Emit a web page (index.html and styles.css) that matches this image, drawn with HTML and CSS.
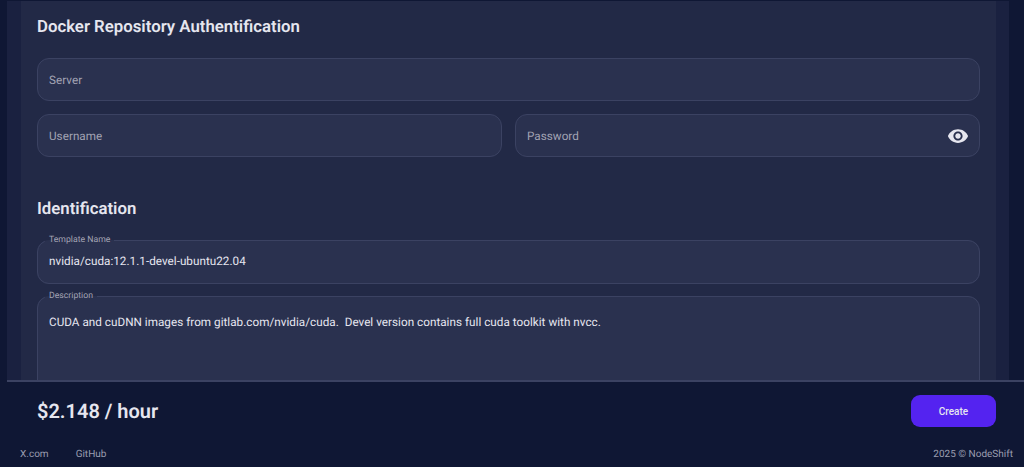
FILE: index.html
```html
<!DOCTYPE html>
<html lang="en">
<head>
  <meta charset="UTF-8">
  <title>Create Template</title>
  <link rel="stylesheet" href="styles.css">
</head>
<body>

  <div class="page">
    <main class="scroll">
      <div class="outer">
        <div class="panel">

          <h2 class="first">Docker Repository Authentification</h2>

          <div class="field">
            <input type="text" placeholder="Server">
          </div>

          <div class="row">
            <div class="field">
              <input type="text" placeholder="Username">
            </div>
            <div class="field">
              <input type="password" placeholder="Password">
              <svg class="eye" viewBox="0 0 24 24" width="24" height="24">
                <path fill="#e6e6ef" d="M12 4.5C7 4.5 2.73 7.61 1 12c1.73 4.39 6 7.5 11 7.5s9.27-3.11 11-7.5c-1.73-4.39-6-7.5-11-7.5zM12 17c-2.76 0-5-2.24-5-5s2.24-5 5-5 5 2.24 5 5-2.24 5-5 5zm0-8c-1.66 0-3 1.34-3 3s1.34 3 3 3 3-1.34 3-3-1.34-3-3-3z"/>
              </svg>
            </div>
          </div>

          <h2 class="second">Identification</h2>

          <fieldset class="outlined">
            <legend>Template Name</legend>
            <input type="text" value="nvidia/cuda:12.1.1-devel-ubuntu22.04">
          </fieldset>

          <fieldset class="outlined">
            <legend>Description</legend>
            <textarea rows="8">CUDA and cuDNN images from gitlab.com/nvidia/cuda.  Devel version contains full cuda toolkit with nvcc.</textarea>
          </fieldset>

        </div>
      </div>
    </main>

    <div class="price-bar">
      <div class="price">$2.148 / hour</div>
      <button>Create</button>
    </div>

    <footer>
      <div class="links">
        <a href="#">X.com</a>
        <a href="#">GitHub</a>
      </div>
      <div>2025 © NodeShift</div>
    </footer>
  </div>

</body>
</html>
```

FILE: styles.css
```css
* {
  box-sizing: border-box;
}
html, body {
  height: 100%;
}
body {
  margin: 0;
  font-family: Roboto, Arial, sans-serif;
  background-color: #0f1734;
  color: #e6e6ef;
  overflow: hidden;
  text-rendering: geometricPrecision;
}
.page {
  display: flex;
  flex-direction: column;
  height: 100vh;
  padding-left: 7px;
}
.scroll {
  flex: 1;
  min-height: 0;
  overflow: hidden;
  padding-top: 1px;
}
.outer {
  margin-right: 15px;
  padding: 0 13px 0 14px;
  background-color: #1a2140;
}
.panel {
  padding: 0 16px;
  background-color: #222946;
  height: 600px;
}
h2 {
  margin: 0;
  font-size: 16.8px;
  font-weight: 600;
  line-height: 20px;
  color: #e6e6ef;
}
h2.first {
  padding-top: 16px;
  margin-bottom: 21px;
}
h2.second {
  margin-top: 42px;
  margin-bottom: 16px;
}
.field {
  display: flex;
  align-items: center;
  flex: 1;
  height: 43px;
  padding: 0 11px;
  background-color: #2a314f;
  border: 1px solid #3b4262;
  border-radius: 12px;
}
.row {
  display: flex;
  gap: 13px;
  margin-top: 13px;
}
input, textarea {
  flex: 1;
  width: 100%;
  padding: 0;
  border: none;
  outline: none;
  background: transparent;
  font-family: inherit;
  font-size: 11.7px;
  letter-spacing: 0.03px;
  color: #e6e6ef;
  resize: none;
  text-rendering: geometricPrecision;
}
input::placeholder {
  color: #a2a3b3;
  opacity: 1;
}
.eye {
  flex: none;
  width: 22px;
  height: 22px;
  margin-right: -1px;
}
.outlined {
  display: flex;
  height: 49px;
  margin: 0 0 7px;
  padding: 0 11px 7px;
  background-color: #2a314f;
  border: 1px solid #3b4262;
  border-radius: 12px;
}
.outlined legend {
  margin-left: -4px;
  padding: 0 4px;
  font-size: 8.7px;
  line-height: 11px;
  color: #a2a3b3;
}
.outlined textarea {
  display: block;
  height: 200px;
  padding-top: 13px;
}
.outlined:last-child {
  height: 200px;
}
.price-bar {
  display: flex;
  flex: none;
  align-items: center;
  justify-content: space-between;
  height: 60px;
  padding: 0 28px 0 30px;
  background-color: #0f1734;
  border-top: 2px solid #3b4262;
}
.price {
  font-size: 20px;
  font-weight: 600;
}
button {
  width: 85px;
  height: 32px;
  background-color: #5423f0;
  color: #e6e6ef;
  border: none;
  border-radius: 9px;
  font-family: inherit;
  font-size: 10px;
  font-weight: 500;
  cursor: pointer;
}
footer {
  display: flex;
  flex: none;
  align-items: center;
  justify-content: space-between;
  height: 27px;
  padding: 1px 11px 0 13px;
  font-size: 10px;
  color: #9a9db0;
}
.links {
  display: flex;
  gap: 27px;
}
.links a {
  color: #9a9db0;
  text-decoration: none;
}
```
